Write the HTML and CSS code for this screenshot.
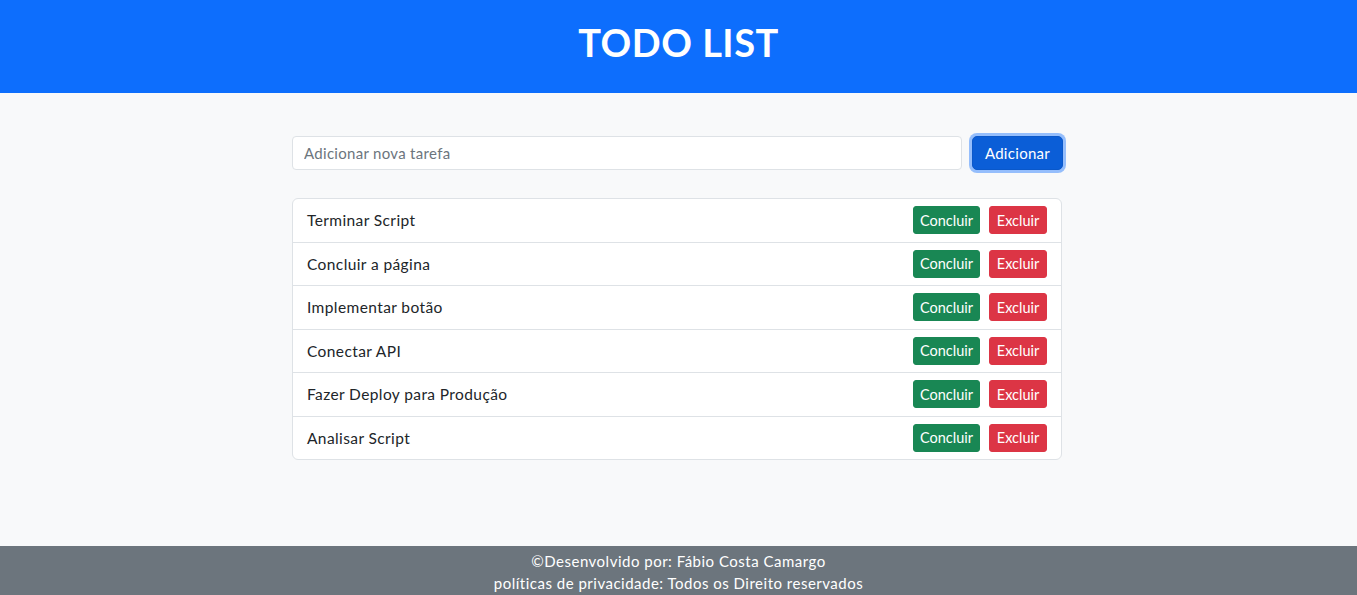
FILE: index.html
```html
<!DOCTYPE html>
<html lang="pt-BR">
<head>
<meta charset="utf-8">
<title>Todo List</title>
<link rel="stylesheet" href="styles.css">
</head>
<body>
<header class="topbar">
  <h1 class="title">TODO LIST</h1>
</header>
<main class="main">
  <div class="container">
    <form class="add-form">
      <input class="add-input" type="text" placeholder="Adicionar nova tarefa">
      <button class="btn btn-primary" type="button">Adicionar</button>
    </form>
    <ul class="task-list">
      <li class="task"><span class="task-text">Terminar Script</span><div class="actions"><button class="btn btn-sm btn-success">Concluir</button><button class="btn btn-sm btn-danger">Excluir</button></div></li>
      <li class="task"><span class="task-text">Concluir a página</span><div class="actions"><button class="btn btn-sm btn-success">Concluir</button><button class="btn btn-sm btn-danger">Excluir</button></div></li>
      <li class="task"><span class="task-text">Implementar botão</span><div class="actions"><button class="btn btn-sm btn-success">Concluir</button><button class="btn btn-sm btn-danger">Excluir</button></div></li>
      <li class="task"><span class="task-text">Conectar API</span><div class="actions"><button class="btn btn-sm btn-success">Concluir</button><button class="btn btn-sm btn-danger">Excluir</button></div></li>
      <li class="task"><span class="task-text">Fazer Deploy para Produção</span><div class="actions"><button class="btn btn-sm btn-success">Concluir</button><button class="btn btn-sm btn-danger">Excluir</button></div></li>
      <li class="task"><span class="task-text">Analisar Script</span><div class="actions"><button class="btn btn-sm btn-success">Concluir</button><button class="btn btn-sm btn-danger">Excluir</button></div></li>
    </ul>
  </div>
</main>
<footer class="footer">
  <p class="footer-line">©Desenvolvido por: Fábio Costa Camargo</p>
  <p class="footer-line">políticas de privacidade: Todos os Direito reservados</p>
</footer>
</body>
</html>
```
FILE: styles.css
```css
* { box-sizing: border-box; }
html, body { margin: 0; padding: 0; }
body {
  font-family: "Lato", "Segoe UI", sans-serif;
  color: #212529;
  background: #f8f9fa;
  height: 100vh;
  display: flex;
  flex-direction: column;
  overflow: hidden;
}
.topbar {
  background: #0d6efd;
  height: 93px;
  display: flex;
  align-items: center;
  justify-content: center;
  padding-bottom: 10px;
  flex: none;
}
.title {
  margin: 0;
  color: #fff;
  font-size: 38px;
  font-weight: 700;
  line-height: 1;
  letter-spacing: 0.5px;
}
.main {
  flex: 1;
  padding-top: 43px;
}
.container {
  width: 773px;
  margin: 0 auto;
}
.add-form {
  display: flex;
  gap: 10px;
  width: 771px;
  margin: 0 0 28px;
}
.add-input {
  flex: 1;
  height: 34px;
  border: 1px solid #dee2e6;
  border-radius: 4px;
  padding: 0 11px;
  font-family: inherit;
  font-size: 15px;
  color: #212529;
  background: #fff;
  letter-spacing: 0.3px;
}
.add-input::placeholder { color: #6c757d; }
.btn {
  font-family: inherit;
  color: #fff;
  border: 1px solid transparent;
  cursor: pointer;
}
.btn-primary {
  width: 91px;
  height: 34px;
  border-radius: 5px;
  background: #0b5ed7;
  border-color: #0a58ca;
  font-size: 15px;
  letter-spacing: 0.3px;
  box-shadow: 0 0 0 3px rgba(49, 132, 253, 0.5);
}
.task-list {
  list-style: none;
  margin: 0;
  padding: 0;
  background: #fff;
  border: 1px solid #dee2e6;
  border-radius: 6px;
  width: 770px;
}
.task {
  display: flex;
  align-items: center;
  justify-content: space-between;
  padding: 7.25px 14px 7.25px 14px;
  border-bottom: 1px solid #dee2e6;
}
.task:last-child { border-bottom: 0; }
.task-text {
  font-size: 15.5px;
  letter-spacing: 0.4px;
}
.actions {
  display: flex;
  gap: 9px;
}
.btn-sm {
  height: 28px;
  padding: 0 6px;
  font-size: 14.5px;
  border-radius: 3px;
}
.btn-success { background: #198754; border-color: #198754; width: 67px; }
.btn-danger { background: #dc3545; border-color: #dc3545; width: 58px; }
.footer {
  flex: none;
  height: 49px;
  background: #6c757d;
  color: #fff;
  text-align: center;
  padding-top: 4px;
}
.footer-line {
  margin: 0;
  font-size: 15px;
  line-height: 22px;
  letter-spacing: 0.5px;
}
```
